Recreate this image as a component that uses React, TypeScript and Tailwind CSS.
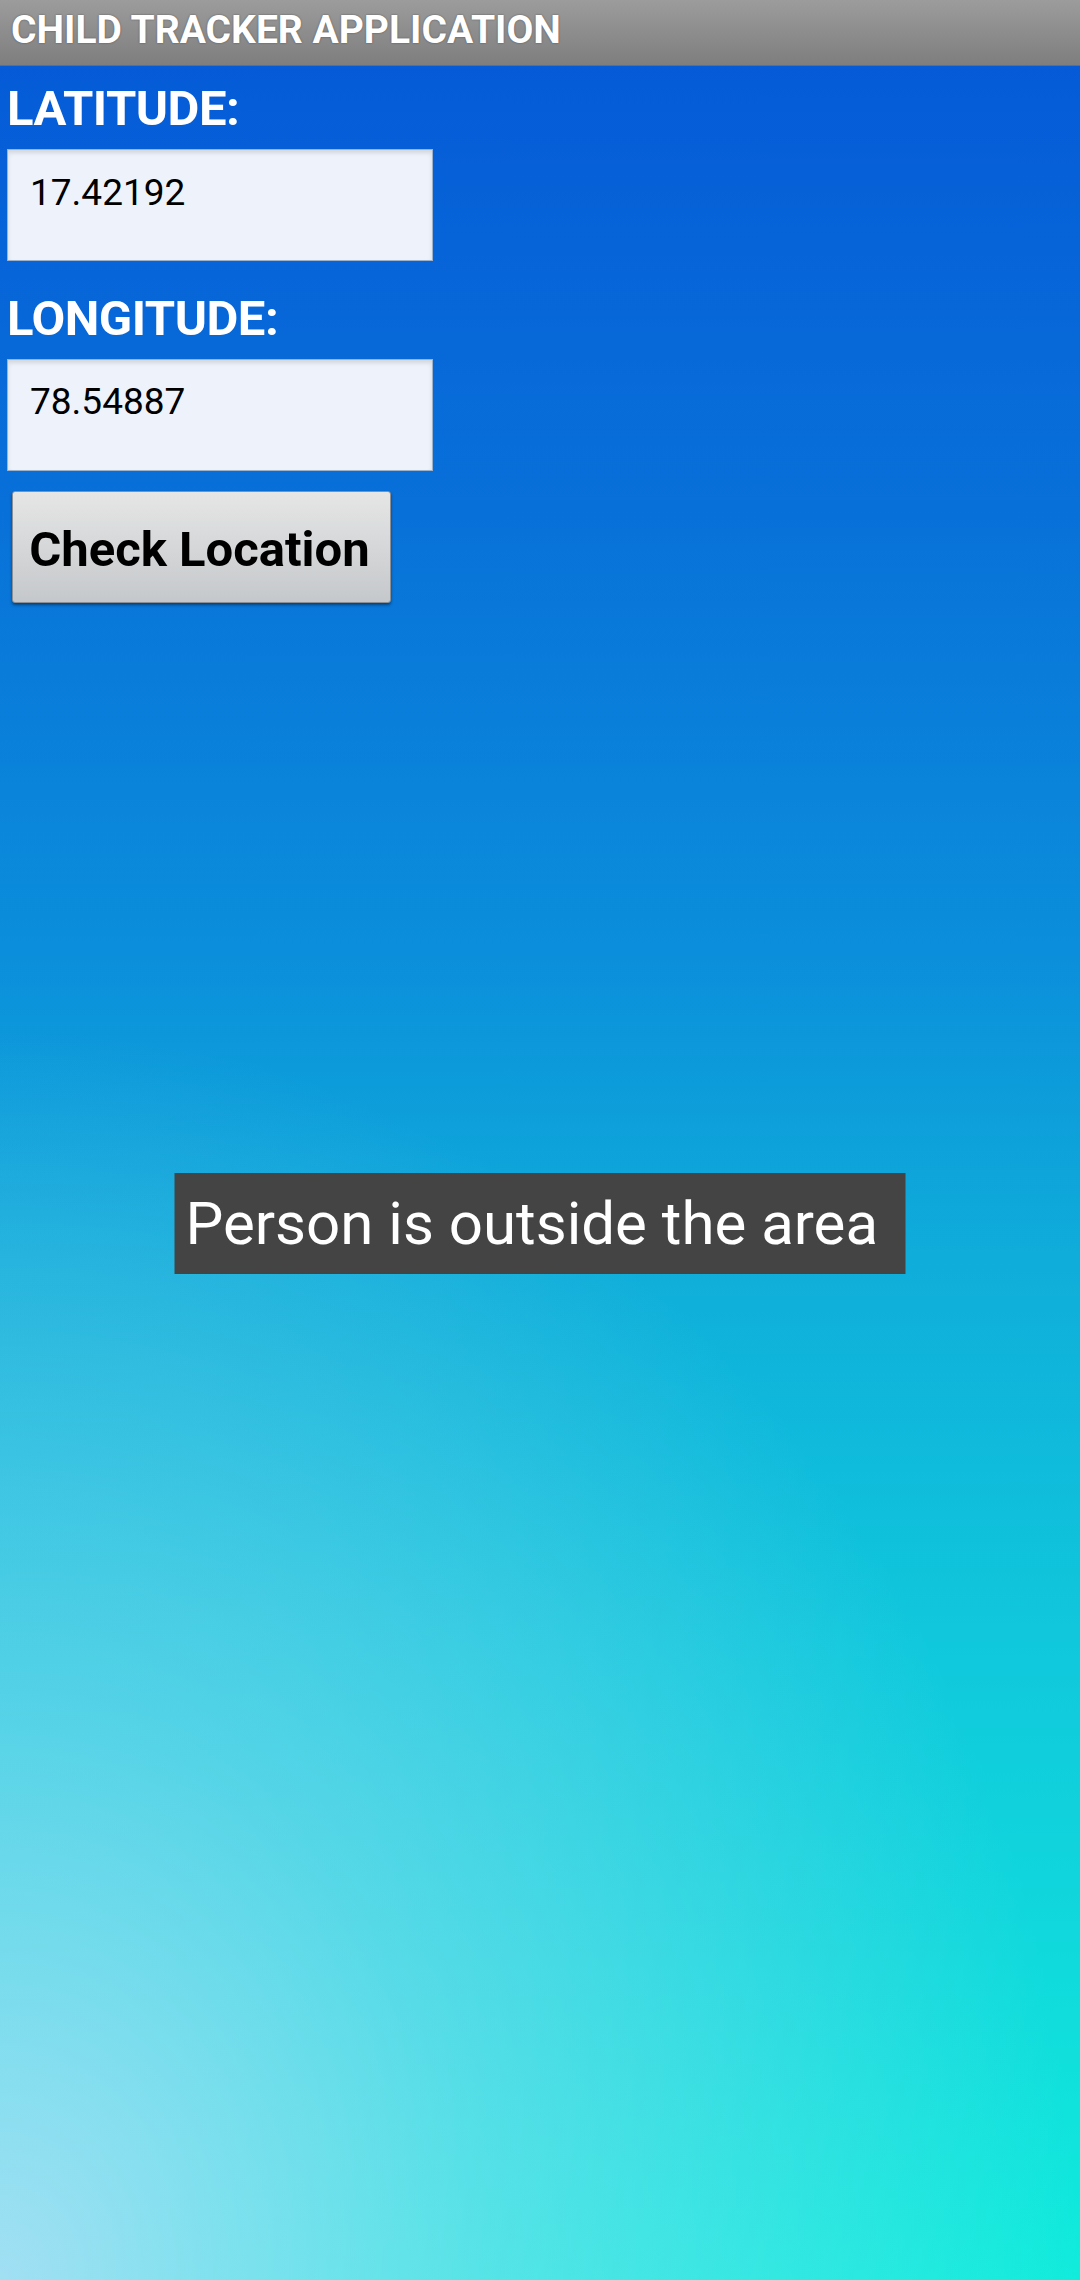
const font = { fontFamily: "Roboto, 'Noto Sans', sans-serif" };

function FieldLabel({ text, className }: { text: string; className?: string }) {
  return (
    <div className={"text-[49px] font-bold leading-none tracking-[-0.5px] text-white " + (className ?? "")}>
      {text}
    </div>
  );
}

function ValueBox({ value, className }: { value: string; className?: string }) {
  return (
    <div
      className={
        "h-[112px] w-[426px] border border-[#9fb2cc] bg-[#eef3fb] pl-[22px] text-[37px] leading-none text-black shadow-[inset_0_3px_4px_rgba(0,0,0,0.12)] " +
        (className ?? "")
      }
    >
      {value}
    </div>
  );
}

export default function App() {
  return (
    <div
      style={font}
      className="relative flex min-h-[2280px] w-[1080px] flex-col bg-[radial-gradient(ellipse_100%_55%_at_0%_100%,rgba(178,222,246,0.9)_0%,rgba(170,218,244,0.45)_45%,rgba(170,218,244,0)_100%),linear-gradient(to_bottom,#0558d7_0%,#0870d9_22%,#0b8fdb_42%,#0fadda_55%,#10c8dc_72%,#10ecdc_100%)]"
    >
      <header className="flex h-[65px] items-center bg-gradient-to-b from-[#9c9c9c] to-[#7e7e7e] pb-[5px] pl-[11px] shadow-[0_1px_0_#5a6f8f]">
        <h1 className="text-[39px] font-bold leading-none text-white [text-shadow:0_0_2px_rgba(0,0,0,0.45)]">
          CHILD TRACKER APPLICATION
        </h1>
      </header>

      <main className="flex flex-col items-start px-[7px]">
        <FieldLabel text="LATITUDE:" className="mt-[19px]" />
        <ValueBox value="17.42192" className="mt-[16px] pt-[24px]" />

        <FieldLabel text="LONGITUDE:" className="mt-[33px]" />
        <ValueBox value="78.54887" className="mt-[16px] pt-[23px]" />

        <button className="ml-[5px] mt-[20px] flex h-[112px] w-[379px] items-center justify-center rounded-[3px] border border-[#8c8f93] bg-gradient-to-b from-[#e6e6e6] to-[#c5c8cb] pr-[4px] pt-[4px] text-[49px] font-bold leading-none text-black shadow-[0_2px_3px_rgba(0,0,0,0.45)]">
          Check Location
        </button>
      </main>

      <div className="absolute left-1/2 top-[1173px] flex h-[101px] w-[731px] -translate-x-1/2 items-center bg-[#444444] pl-[11px] text-[60px] leading-none text-white">
        Person is outside the area
      </div>
    </div>
  );
}
